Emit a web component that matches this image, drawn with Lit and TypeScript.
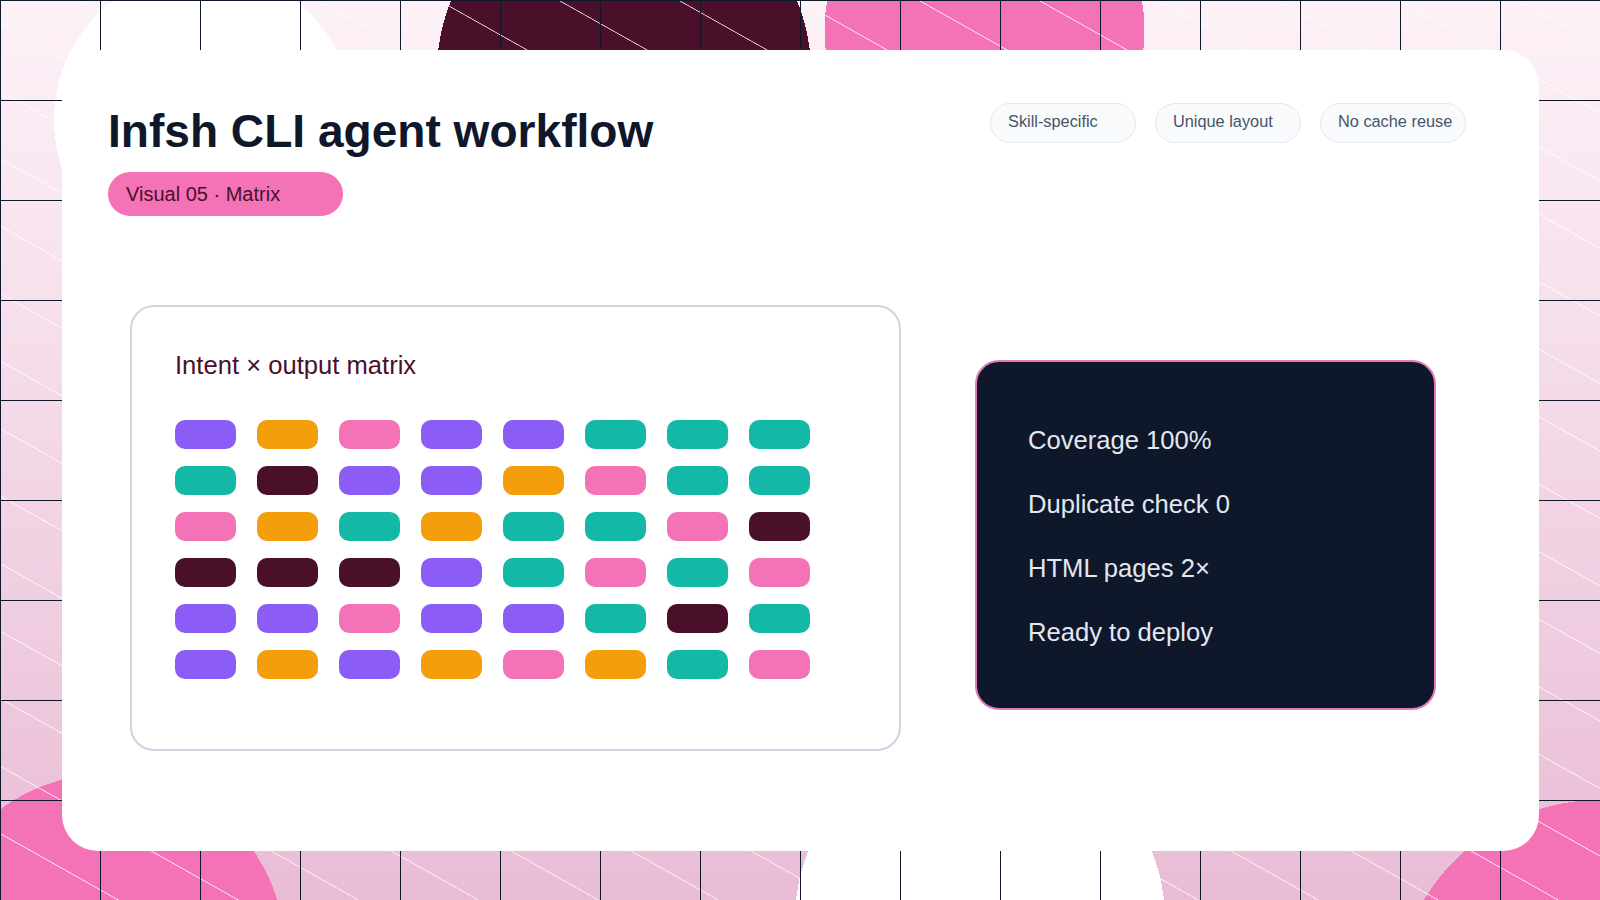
import { LitElement, css, html } from "lit";
import { customElement } from "lit/decorators.js";

const P = "#8b5cf6";
const A = "#f59e0b";
const K = "#f472b6";
const T = "#14b8a6";
const D = "#4a102a";

const rows = [
  [P, A, K, P, P, T, T, T],
  [T, D, P, P, A, K, T, T],
  [K, A, T, A, T, T, K, D],
  [D, D, D, P, T, K, T, K],
  [P, P, K, P, P, T, D, T],
  [P, A, P, A, K, A, T, K],
];

const stats = ["Coverage 100%", "Duplicate check 0", "HTML pages 2×", "Ready to deploy"];
const chips = ["Skill-specific", "Unique layout", "No cache reuse"];

@customElement("app-root")
export class AppRoot extends LitElement {
  static styles = css`
    :host {
      display: block;
      width: 1600px;
      height: 900px;
      box-sizing: border-box;
      padding: 50px 61px 49px 62px;
      font-family: "Liberation Sans", Arial, sans-serif;
      background:
        linear-gradient(#0f172a 1px, transparent 1px) 0 0 / 100px 100px,
        linear-gradient(90deg, #0f172a 1px, transparent 1px) 0 0 / 100px 100px,
        repeating-linear-gradient(29.36deg, transparent 0 57.3px, #fff 58px, transparent 58.7px 58.83px),
        radial-gradient(circle at 204px 120px, #fff 150px, transparent 150px),
        radial-gradient(circle at 624px 72px, #4a102a 187px, transparent 187px),
        radial-gradient(circle at 984.5px 30px, #f472b6 160px, transparent 160px),
        radial-gradient(circle at 107px 952px, #f472b6 178px, transparent 178px),
        radial-gradient(circle at 980px 920px, #fff 185px, transparent 185px),
        radial-gradient(circle at 1600px 1005px, #f472b6 205px, transparent 205px),
        linear-gradient(#fdf2f8, #e9bcd5);
    }

    .card {
      height: 100%;
      box-sizing: border-box;
      background: #fff;
      border-radius: 36px;
      padding: 54px 73px 0 46px;
    }

    .head {
      display: flex;
      justify-content: space-between;
      align-items: flex-start;
    }

    h1 {
      margin: 0;
      font-size: 46.08px;
      line-height: 54px;
      font-weight: 700;
      color: #0f172a;
    }

    .tag {
      width: 235px;
      height: 44px;
      box-sizing: border-box;
      margin-top: 14px;
      padding: 11px 18px;
      border-radius: 22px;
      background: #f472b6;
      color: #4a102a;
      font-size: 20px;
      line-height: 23px;
    }

    .chips {
      display: flex;
      gap: 19px;
      margin-top: -1px;
    }

    .chip {
      width: 146px;
      height: 40px;
      box-sizing: border-box;
      padding: 8px 17px;
      border: 1px solid #e2e8f0;
      border-radius: 20px;
      background: #f8fafc;
      color: #475569;
      font-size: 16.32px;
      line-height: 19px;
      white-space: nowrap;
    }

    .body {
      display: flex;
      align-items: flex-start;
      margin: 89px 0 0 22px;
    }

    .matrix {
      width: 771px;
      height: 446px;
      box-sizing: border-box;
      padding: 43px 43px;
      border: 2px solid #cbd5e1;
      border-radius: 24px;
    }

    h2 {
      margin: 0 0 40px;
      font-size: 25.6px;
      line-height: 30px;
      font-weight: 400;
      color: #4a102a;
    }

    .grid {
      display: grid;
      grid-template-columns: repeat(8, 61px);
      grid-auto-rows: 29px;
      gap: 17px 21px;
    }

    .cell {
      border-radius: 10px;
    }

    .stats {
      width: 461px;
      height: 350px;
      box-sizing: border-box;
      margin: 55px 0 0 74px;
      padding: 63px 51px;
      border: 2px solid #e17cb6;
      border-radius: 24px;
      background: #0f172a;
      display: flex;
      flex-direction: column;
      gap: 34px;
    }

    .stat {
      color: #e2e8f0;
      font-size: 25.6px;
      line-height: 30px;
    }
  `;

  render() {
    return html`
      <div class="card">
        <div class="head">
          <div>
            <h1>Infsh CLI agent workflow</h1>
            <div class="tag">Visual 05 · Matrix</div>
          </div>
          <div class="chips">
            ${chips.map((c) => html`<div class="chip">${c}</div>`)}
          </div>
        </div>
        <div class="body">
          <section class="matrix">
            <h2>Intent × output matrix</h2>
            <div class="grid">
              ${rows.flat().map((c) => html`<div class="cell" style="background:${c}"></div>`)}
            </div>
          </section>
          <aside class="stats">
            ${stats.map((s) => html`<div class="stat">${s}</div>`)}
          </aside>
        </div>
      </div>
    `;
  }
}
